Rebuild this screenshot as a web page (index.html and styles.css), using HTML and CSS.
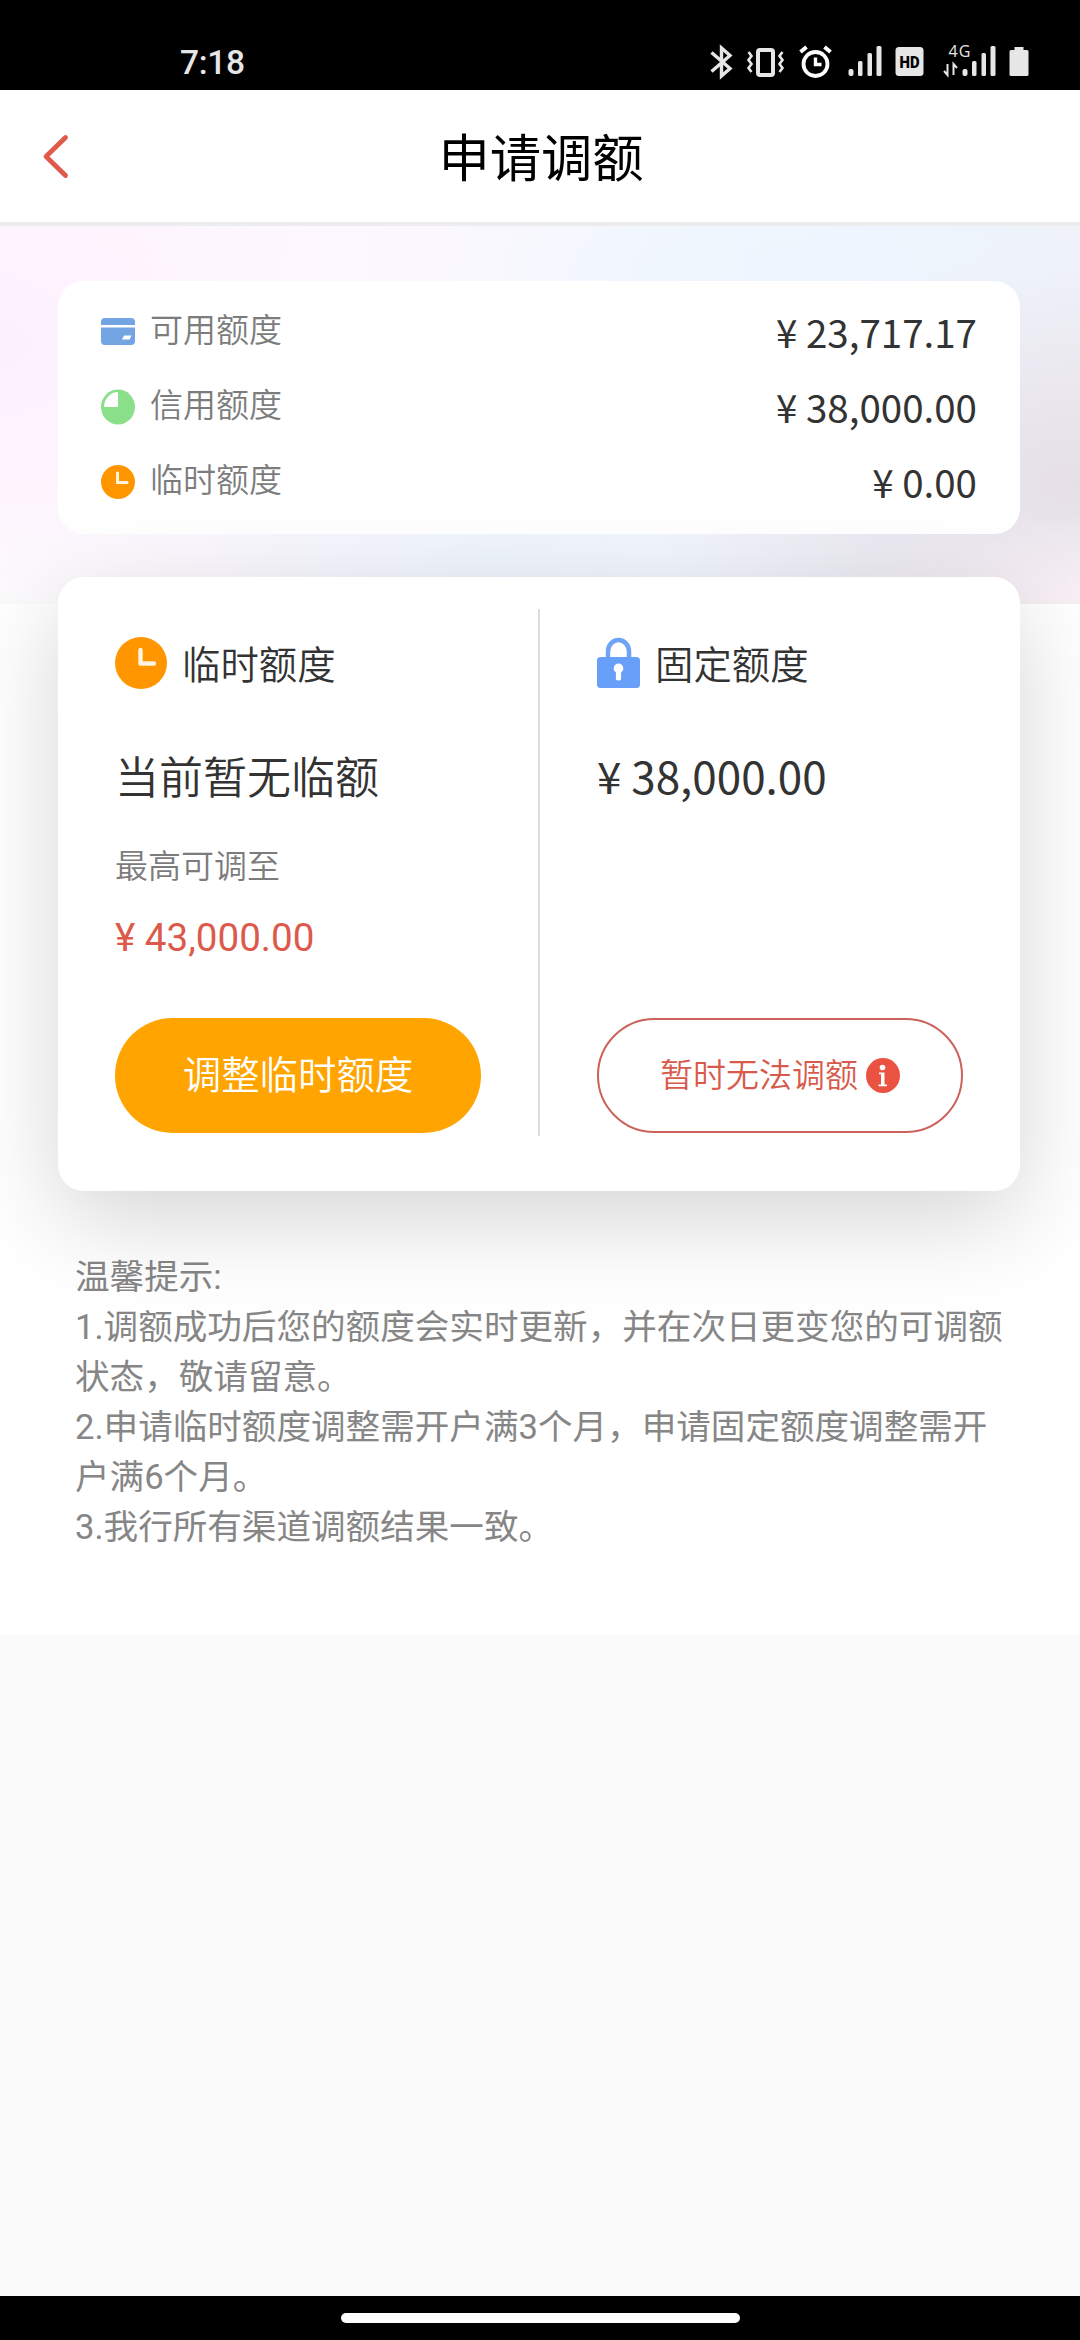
FILE: index.html
```
<!DOCTYPE html>
<html lang="zh-CN">
<head>
<meta charset="utf-8">
<title>申请调额</title>
<link rel="stylesheet" href="styles.css">
</head>
<body>
<div class="status">
  <span class="time">7:18</span>
  <div class="status-icons">
    <svg width="32" height="90" viewBox="707.500 0 32 90" fill="none" stroke="#e6e6e6" stroke-width="3.4"><path d="M711 52.500l18.500 16-8.500 7.500V48l8.500 7.500-18.500 16"/></svg>
    <svg width="50" height="90" viewBox="739.500 0 50 90" fill="none" stroke="#e6e6e6"><rect x="757.500" y="50" width="15" height="25" rx="2" stroke-width="4"/><path d="M748 52l3 4-3 4 3 4-3 4 3 4M782 52l-3 4 3 4-3 4 3 4-3 4" stroke-width="2.600"/></svg>
    <svg width="50" height="90" viewBox="789.500 0 50 90" fill="none" stroke="#fff"><circle cx="815" cy="64" r="12" stroke-width="3.800"/><path d="M800 52l6-5M830 52l-6-5" stroke-width="4"/><path d="M815 57.500v7h6" stroke-width="3.400"/></svg>
    <svg width="48" height="90" viewBox="839.500 0 48 90" fill="#e6e6e6"><rect x="848" y="69" width="5" height="7" rx="2"/><rect x="857.500" y="61" width="4.500" height="15" rx="1.500"/><rect x="867" y="53" width="4.500" height="23" rx="1.500"/><rect x="876" y="46" width="5" height="30" rx="1.500"/></svg>
    <svg width="42" height="90" viewBox="887.500 0 42 90"><rect x="895" y="47" width="28" height="29" rx="3.500" fill="#e6e6e6"/><text x="909" y="67.500" class="hd" text-anchor="middle" textLength="20" lengthAdjust="spacingAndGlyphs">HD</text></svg>
    <svg width="70" height="90" viewBox="928.500 0 70 90" fill="#e6e6e6"><text x="947" y="57" class="net" textLength="22">4G</text><path d="M946 64v11l-3.500-4M952 75V64l3.500 4" fill="none" stroke="#e6e6e6" stroke-width="2"/><rect x="961" y="69" width="5" height="7" rx="2"/><rect x="970.500" y="61" width="4.500" height="15" rx="1.500"/><rect x="980" y="53" width="4.500" height="23" rx="1.500"/><rect x="989" y="46" width="5" height="30" rx="1.500"/></svg>
    <svg width="80" height="90" viewBox="998.500 0 80 90" fill="#e6e6e6"><path d="M1013 50v-3h9v3h3.500q1.500 0 1.500 1.500v23q0 1.500-1.500 1.500h-16q-1.500 0-1.500-1.500v-23q0-1.500 1.500-1.500z"/></svg>
  </div>
</div>
<header class="header">
  <svg class="back" width="28" height="48" viewBox="0 0 28 48" fill="none" stroke="#e05a4c" stroke-width="4.800" stroke-linecap="round" stroke-linejoin="round"><path d="M23.500 4.500L4 23.500l19.500 19"/></svg>
  <h1 class="title">申请调额</h1>
</header>
<main class="main">
  <div class="hero">
    <section class="summary">
      <div class="row">
        <svg class="row-icon" width="34" height="36" viewBox="0 0 34 36"><rect y="4" width="34" height="27" rx="4" fill="#73a5e3"/><path d="M0 12.300h34" stroke="#fff" stroke-width="2.600"/><path d="M23 21.500h7.500l-2 4H21z" fill="#fff"/></svg>
        <span class="row-label">可用额度</span><span class="row-value">¥ 23,717.17</span>
      </div>
      <div class="row">
        <svg class="row-icon" width="34" height="36" viewBox="0 0 34 36"><ellipse cx="17" cy="18" rx="17" ry="17.500" fill="#8ae08a"/><path d="M17 18H3A14 15 0 0 1 17 3z" fill="#fff"/></svg>
        <span class="row-label">信用额度</span><span class="row-value">¥ 38,000.00</span>
      </div>
      <div class="row">
        <svg class="row-icon" width="34" height="36" viewBox="0 0 34 36"><circle cx="17" cy="18" r="17" fill="#ff9600"/><path d="M16.500 9v9.500H26" fill="none" stroke="#fff5df" stroke-width="3" stroke-linecap="round"/></svg>
        <span class="row-label">临时额度</span><span class="row-value">¥ 0.00</span>
      </div>
    </section>
  </div>
  <section class="adjust">
    <div class="col">
      <div class="col-head"><svg width="52" height="52" viewBox="0 0 52 52"><circle cx="26" cy="26" r="26" fill="#ff9600"/><path d="M25.500 13v13.500H39" fill="none" stroke="#fff5df" stroke-width="4.400" stroke-linecap="round" stroke-linejoin="round"/></svg><h2 class="col-title wide">临时额度</h2></div>
      <p class="amount">当前暂无临额</p>
      <p class="hint">最高可调至</p>
      <p class="max">¥ 43,000.00</p>
      <button class="btn solid">调整临时额度</button>
    </div>
    <div class="divider"></div>
    <div class="col">
      <div class="col-head"><svg width="43" height="52" viewBox="0 0 43 52"><path d="M11 21V14.500a10.500 11.500 0 0 1 21 0V21" fill="none" stroke="#6ea3f5" stroke-width="4.500"/><rect y="20" width="43" height="31" rx="3.500" fill="#689ff8"/><path d="M21.500 26.500a4.800 4.800 0 0 1 2.600 8.800V42q0 1.500-2.600 1.500T18.900 42v-6.700a4.800 4.800 0 0 1 2.600-8.800z" fill="#fff"/></svg><h2 class="col-title">固定额度</h2></div>
      <p class="amount number">¥ 38,000.00</p>
      <button class="btn outline"><span>暂时无法调额</span><svg width="34" height="35" viewBox="0 0 34 35"><ellipse cx="17" cy="17.500" rx="17" ry="17.500" fill="#ea5341"/><circle cx="16.500" cy="9.500" r="2.800" fill="#fff"/><path d="M13 14.500h5.500V26.500H21v1.700h-8.500v-1.700H15V16.200h-2z" fill="#fff"/></svg></button>
    </div>
  </section>
  <section class="tips">
    <p>温馨提示:</p>
    <p>1.调额成功后您的额度会实时更新，并在次日更变您的可调额状态，敬请留意。</p>
    <p>2.申请临时额度调整需开户满3个月，申请固定额度调整需开户满6个月。</p>
    <p>3.我行所有渠道调额结果一致。</p>
  </section>
</main>
<footer class="nav"><div class="pill"></div></footer>
</body>
</html>
```
FILE: styles.css
```
* { box-sizing: border-box; margin: 0; padding: 0; }
body {
  width: 1080px;
  height: 2340px;
  display: flex;
  flex-direction: column;
  background: #fafafa;
  font-family: "Noto Sans CJK SC", sans-serif;
  color: #333;
  overflow: hidden;
}
svg { display: block; flex: none; }
.status {
  height: 90px;
  flex: none;
  display: flex;
  justify-content: space-between;
  background: #000;
}
.time {
  padding: 43px 0 0 180px;
  font: 500 33.5px/40px Roboto, sans-serif;
  letter-spacing: -.3px;
  color: #e6e6e6;
}
.status-icons { display: flex; }
.hd { font: 900 17px Roboto, sans-serif; fill: #000; }
.net { font: 400 16px "Open Sans", sans-serif; }
.header {
  height: 136px;
  flex: none;
  display: flex;
  align-items: center;
  background: #fff;
  border-bottom: 4px solid #ececee;
  padding: 0 42px;
}
.back { margin-top: 2px; }
.title {
  flex: 1;
  margin: -3px 26px 0 0;
  text-align: center;
  font-size: 51.3px;
  line-height: 70px;
  font-weight: 400;
  color: #000;
}
.main { height: 1409px; flex: none; background: #fff; }
.hero {
  height: 378px;
  padding: 55px 60px 0 58px;
  background:
    radial-gradient(ellipse 260px 220px at 0 120px, #fdf0fe 0%, rgba(253, 240, 254, 0) 100%),
    radial-gradient(ellipse 320px 110px at 0 100%, #fcfbfc 0%, rgba(252, 251, 252, 0) 100%),
    radial-gradient(ellipse 260px 90px at 100% 100%, #f9f0f5 0%, rgba(249, 240, 245, 0) 100%),
    radial-gradient(ellipse 440px 230px at 100% 68%, #e6dfe8 0%, rgba(230, 223, 232, 0) 100%),
    radial-gradient(ellipse 340px 150px at 76% 14%, #edf5fe 0%, rgba(237, 245, 254, 0) 100%),
    radial-gradient(ellipse 380px 120px at 46% 88%, #eff5fc 0%, rgba(239, 245, 252, 0) 100%),
    linear-gradient(100deg, #fef6ff 0%, #fdf7ff 32%, #f5f8fe 55%, #eff3fa 85%, #f1f2f7 100%);
}
.summary {
  height: 253px;
  padding: 14px 43px 0 43px;
  border-radius: 26px;
  background: #fff;
}
.row { height: 75px; display: flex; align-items: center; }
.row-icon { margin-top: -2px; }
.row-label {
  margin: -9px 0 0 15px;
  font-size: 33px;
  line-height: 48px;
  font-weight: 350;
  color: #7c7c7c;
}
.row-value { margin: -4px 0 0 auto; font-size: 38.5px; line-height: 56px; font-weight: 400; }
.adjust {
  position: relative;
  width: 962px;
  height: 614px;
  margin: -27px 0 0 58px;
  padding: 32px 0 0;
  display: flex;
  border-radius: 26px;
  background: #fff;
  box-shadow: 0 28px 96px rgba(0, 0, 0, .17);
}
.col {
  width: 480px;
  height: 524px;
  padding: 28px 0 0 57px;
  display: flex;
  flex-direction: column;
  align-items: flex-start;
}
.divider { width: 2px; height: 527px; background: #dcdcdc; }
.col-head { height: 52px; display: flex; align-items: center; }
.col-title {
  margin: -2px 0 0 15px;
  font-size: 38.4px;
  line-height: 56px;
  font-weight: 350;
}
.amount {
  margin-top: 54px;
  font-size: 44px;
  line-height: 64px;
  font-weight: 350;
}
.amount.number { font-weight: 400; }
.hint { margin-top: 33px; font-size: 33px; line-height: 48px; font-weight: 350; color: #7c7c7c; }
.max { margin-top: 27px; font: 400 38.6px/46px Roboto, sans-serif; color: #dc5a4c; }
.btn {
  width: 366px;
  height: 115px;
  margin-top: auto;
  display: flex;
  align-items: center;
  justify-content: center;
  border: 0;
  border-radius: 58px;
  font-family: inherit;
  font-weight: 350;
}
.solid { padding-bottom: 7px; background: #ffa400; color: #fff; font-size: 38.4px; }
.outline { gap: 8px; background: #fff; border: 2px solid #cc625c; color: #d85a4c; font-size: 33px; }
.outline span { padding-bottom: 6px; }
.tips {
  width: 934px;
  margin: 61px 0 0 75px;
  font-family: Roboto, "Noto Sans CJK SC", sans-serif;
  font-size: 34.6px;
  line-height: 50px;
  color: #868686;
}
.nav {
  height: 44px;
  flex: none;
  margin-top: auto;
  display: flex;
  justify-content: center;
  padding-top: 17px;
  background: #000;
}
.pill { width: 399px; height: 10px; border-radius: 5px; background: #fff; }
```
